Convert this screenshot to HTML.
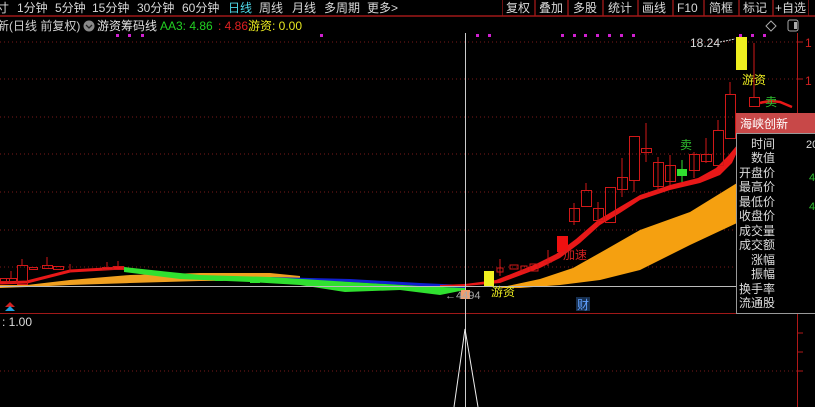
<!DOCTYPE html>
<html><head><meta charset="utf-8"><style>
body{margin:0;background:#000;width:815px;height:407px;overflow:hidden;font-family:"Liberation Sans","Noto Sans CJK SC",sans-serif;}
svg{display:block}
text{font-family:"Liberation Sans","Noto Sans CJK SC",sans-serif;}
</style></head><body>
<svg width="815" height="407" viewBox="0 0 815 407" xmlns="http://www.w3.org/2000/svg">
<rect width="815" height="407" fill="#000"/>
<g font-size="12" fill="#d8d8d8">
<text x="-3" y="12">寸</text><text x="17" y="12">1分钟</text><text x="55" y="12">5分钟</text><text x="92" y="12">15分钟</text><text x="137" y="12">30分钟</text><text x="182" y="12">60分钟</text>
<text x="228" y="12" fill="#4fd8e8">日线</text><text x="259" y="12">周线</text><text x="292" y="12">月线</text><text x="324" y="12">多周期</text><text x="367" y="12">更多&gt;</text>
</g>
<g stroke="#6a1010" fill="none"><rect x="502.5" y="-1" width="32" height="17"/><rect x="535.5" y="-1" width="32" height="17"/><rect x="568.5" y="-1" width="34" height="17"/><rect x="603.5" y="-1" width="34" height="17"/><rect x="638.5" y="-1" width="34" height="17"/><rect x="673.5" y="-1" width="30" height="17"/><rect x="704.5" y="-1" width="34" height="17"/><rect x="739.5" y="-1" width="33" height="17"/><rect x="773.5" y="-1" width="35" height="17"/></g>
<g font-size="12" fill="#d8d8d8"><text x="506" y="12">复权</text><text x="539" y="12">叠加</text><text x="573" y="12">多股</text><text x="608" y="12">统计</text><text x="642" y="12">画线</text><text x="677" y="12">F10</text><text x="709" y="12">简框</text><text x="743" y="12">标记</text><text x="775" y="12">+自选</text></g>
<line x1="0" y1="16" x2="815" y2="16" stroke="#a01818" stroke-width="1.5"/>
<g font-size="12"><text x="-3" y="30" fill="#cfcfcf">新(日线 前复权)</text>
<circle cx="89" cy="26" r="5.5" fill="#888"/><path d="M86 25l3 3 3-3" stroke="#222" stroke-width="1.3" fill="none"/>
<text x="97" y="30" fill="#e0e0e0">游资筹码线</text>
<text x="160" y="30" fill="#22d022">AA3: 4.86</text><text x="218" y="30" fill="#e02020">: 4.86</text><text x="248" y="30" fill="#e8e820">游资: 0.00</text></g>
<g fill="#d020d0"><rect x="116" y="34" width="3" height="3"/><rect x="128" y="34" width="3" height="3"/><rect x="141" y="34" width="3" height="3"/><rect x="320" y="34" width="3" height="3"/><rect x="476" y="34" width="3" height="3"/><rect x="488" y="34" width="3" height="3"/><rect x="561" y="34" width="3" height="3"/><rect x="573" y="34" width="3" height="3"/><rect x="584" y="34" width="3" height="3"/><rect x="596" y="34" width="3" height="3"/><rect x="608" y="34" width="3" height="3"/><rect x="620" y="34" width="3" height="3"/><rect x="632" y="34" width="3" height="3"/><rect x="739" y="34" width="3" height="3"/><rect x="751" y="34" width="3" height="3"/><rect x="763" y="34" width="3" height="3"/></g>
<path d="M771 21l5 5-5 5-5-5z" stroke="#aaa" fill="none"/><rect x="788" y="20" width="10" height="11" rx="2" stroke="#aaa" fill="none"/><rect x="794" y="22" width="3" height="7" fill="#aaa"/>
<g stroke="#7a1a1a" stroke-dasharray="1 3"><line x1="0" y1="42" x2="797" y2="42"/><line x1="0" y1="79" x2="797" y2="79"/><line x1="0" y1="117" x2="797" y2="117"/><line x1="0" y1="154" x2="797" y2="154"/><line x1="0" y1="192" x2="797" y2="192"/><line x1="0" y1="230" x2="797" y2="230"/><line x1="0" y1="267" x2="797" y2="267"/><line x1="0" y1="371" x2="797" y2="371"/></g>
<line x1="797.5" y1="33" x2="797.5" y2="407" stroke="#b01818"/>
<g stroke="#b01818"><line x1="798" y1="42" x2="803" y2="42"/><line x1="798" y1="79" x2="803" y2="79"/><line x1="798" y1="117" x2="803" y2="117"/><line x1="798" y1="333" x2="803" y2="333"/><line x1="798" y1="352" x2="803" y2="352"/><line x1="798" y1="371" x2="803" y2="371"/></g>
<g fill="#d02020" font-size="12"><text x="805" y="47">1</text><text x="805" y="85">1</text></g>
<line x1="0" y1="313.5" x2="815" y2="313.5" stroke="#a01818"/>
<polygon points="0,285 27,285 70,280 130,275 200,273 270,273 300,276 300,280 200,281 130,283 70,285 27,287 0,288" fill="#f0a020"/>
<polygon points="270,277 350,279 420,283 465,285 465,288 420,286 350,282 270,278" fill="#1020d0"/>
<polygon points="124,267 170,272 200,275 270,277 350,282 420,286 465,288 465,290 440,295 400,290 345,292 300,285 250,282 180,279 124,272" fill="#30e030"/>
<g fill="#30e030"><rect x="215" y="277" width="8" height="4"/><rect x="250" y="279" width="10" height="4"/><rect x="345" y="286" width="10" height="4"/><rect x="365" y="286" width="8" height="5"/><rect x="410" y="286" width="12" height="5"/></g>
<polyline points="0,283 27,282 70,271 123,268" stroke="#e81818" stroke-width="3" fill="none"/>
<polygon points="440,287 465,286 500,283 540,268 560,258 580,243 600,225 620,213 640,200 670,190 700,183 720,175 732,163 738,150 738,144 728,156 716,168 698,178 670,185 640,195 618,208 598,220 576,239 556,254 536,264 496,280 465,284 440,285" fill="#e81818"/>
<path d="M760 103 Q770 100 780 102 L792 107" stroke="#e81818" stroke-width="2.5" fill="none"/>
<g stroke="#d01818" fill="none"><rect x="0.5" y="278.5" width="9" height="3"/><rect x="6.5" y="278.5" width="10" height="4"/><line x1="11" y1="271" x2="11" y2="278"/><rect x="17.5" y="265.5" width="10" height="19"/><line x1="22" y1="259" x2="22" y2="265"/><rect x="29.5" y="267.5" width="8" height="2"/><rect x="42.5" y="265.5" width="10" height="3"/><line x1="47" y1="257" x2="47" y2="265"/><rect x="53.5" y="266.5" width="10" height="3"/><rect x="102.5" y="267.5" width="10" height="2"/><line x1="107" y1="262" x2="107" y2="267"/><rect x="113.5" y="266.5" width="10" height="3"/><line x1="118" y1="261" x2="118" y2="266"/><line x1="70" y1="264" x2="70" y2="272"/></g>
<g stroke="#d01818" fill="none"><rect x="497" y="268" width="6" height="4"/><line x1="500" y1="259" x2="500" y2="276"/><rect x="510" y="265" width="8" height="4"/><rect x="521" y="266" width="6" height="5"/><rect x="530" y="264" width="8" height="7"/><line x1="548" y1="250" x2="548" y2="266"/><line x1="544" y1="262" x2="552" y2="262"/>
<rect x="569.5" y="208.5" width="10" height="13"/><line x1="574" y1="203" x2="574" y2="225"/>
<rect x="581.5" y="190.5" width="10" height="16"/><line x1="586" y1="183" x2="586" y2="190"/>
<rect x="593.5" y="208.5" width="10" height="12"/><line x1="598" y1="202" x2="598" y2="226"/>
<rect x="605.5" y="187.5" width="10" height="35"/>
<rect x="617.5" y="177.5" width="10" height="12"/><line x1="622" y1="158" x2="622" y2="197"/>
<rect x="629.5" y="136.5" width="10" height="44"/><line x1="634" y1="180" x2="634" y2="192"/>
<rect x="641.5" y="148.5" width="10" height="4"/><line x1="646" y1="123" x2="646" y2="162"/>
<rect x="653.5" y="162.5" width="10" height="24"/><line x1="658" y1="157" x2="658" y2="192"/>
<rect x="665.5" y="165.5" width="10" height="16"/><line x1="670" y1="155" x2="670" y2="185"/>
<rect x="689.5" y="154.5" width="10" height="16"/><line x1="694" y1="152" x2="694" y2="178"/>
<rect x="701.5" y="154.5" width="10" height="7"/><line x1="706" y1="138" x2="706" y2="163"/>
<rect x="713.5" y="130.5" width="10" height="35"/><line x1="718" y1="120" x2="718" y2="130"/>
<rect x="725.5" y="94.5" width="10" height="44"/><line x1="730" y1="82" x2="730" y2="94"/>
<rect x="749.5" y="97.5" width="10" height="9"/><line x1="754" y1="43" x2="754" y2="97"/></g>
<line x1="682" y1="160" x2="682" y2="182" stroke="#30e030"/><rect x="677" y="169" width="10" height="7" fill="#30e030"/>
<rect x="557" y="236" width="11" height="16" fill="#f01010"/>
<rect x="736" y="37" width="11" height="33" fill="#f0f020"/>
<rect x="484" y="271" width="10" height="16" fill="#f0f020"/>
<polygon points="498,288 540,279 573,268 605,250 640,230 690,212 737,183 737,223 690,245 640,270 600,280 560,285 520,288" fill="#f5a010"/>
<line x1="0" y1="286.5" x2="736" y2="286.5" stroke="#bbb"/>
<line x1="465.5" y1="33" x2="465.5" y2="407" stroke="#ccc"/>
<text x="690" y="47" font-size="12" fill="#ddd">18.24</text><path d="M720 42 L735 39" stroke="#ddd" stroke-dasharray="2 1"/>
<text x="742" y="84" font-size="12" fill="#e8e820">游资</text>
<text x="765" y="106" font-size="12" fill="#30c030">卖</text>
<text x="680" y="149" font-size="12" fill="#30c030">卖</text>
<text x="563" y="259" font-size="12" fill="#d02020">加速</text>
<text x="491" y="296" font-size="12" fill="#e8e820">游资</text>
<rect x="461" y="290" width="9" height="9" fill="#f0a070"/><text x="445" y="299" font-size="11" fill="#aaa">←4494</text>
<rect x="576" y="297" width="14" height="14" fill="#183050"/><text x="577" y="309" font-size="12" fill="#60a0ff">财</text>
<path d="M5 307 l5-5 5 5z" fill="#d02020"/><path d="M5 311 l5-5 5 5z" fill="#20a0e0"/>
<text x="2" y="326" font-size="12" fill="#ddd">: 1.00</text>
<path d="M454 407 L465 329 L478 407" stroke="#eee" fill="none"/>
<rect x="736" y="113" width="79" height="20" fill="#c84848"/>
<text x="740" y="128" font-size="12" fill="#fff">海峡创新</text>
<rect x="736.5" y="133.5" width="80" height="180" fill="#000" stroke="#999"/>
<g font-size="12" fill="#ddd" text-anchor="end"><text x="775" y="148">时间</text><text x="775" y="162">数值</text><text x="775" y="177">开盘价</text><text x="775" y="191">最高价</text><text x="775" y="206">最低价</text><text x="775" y="220">收盘价</text><text x="775" y="235">成交量</text><text x="775" y="249">成交额</text><text x="775" y="264">涨幅</text><text x="775" y="278">振幅</text><text x="775" y="293">换手率</text><text x="775" y="307">流通股</text></g>
<text x="806" y="148" font-size="11" fill="#ddd">20</text>
<text x="809" y="181" font-size="11" fill="#30c030">4</text><text x="809" y="210" font-size="11" fill="#30c030">4</text>
</svg>
</body></html>
